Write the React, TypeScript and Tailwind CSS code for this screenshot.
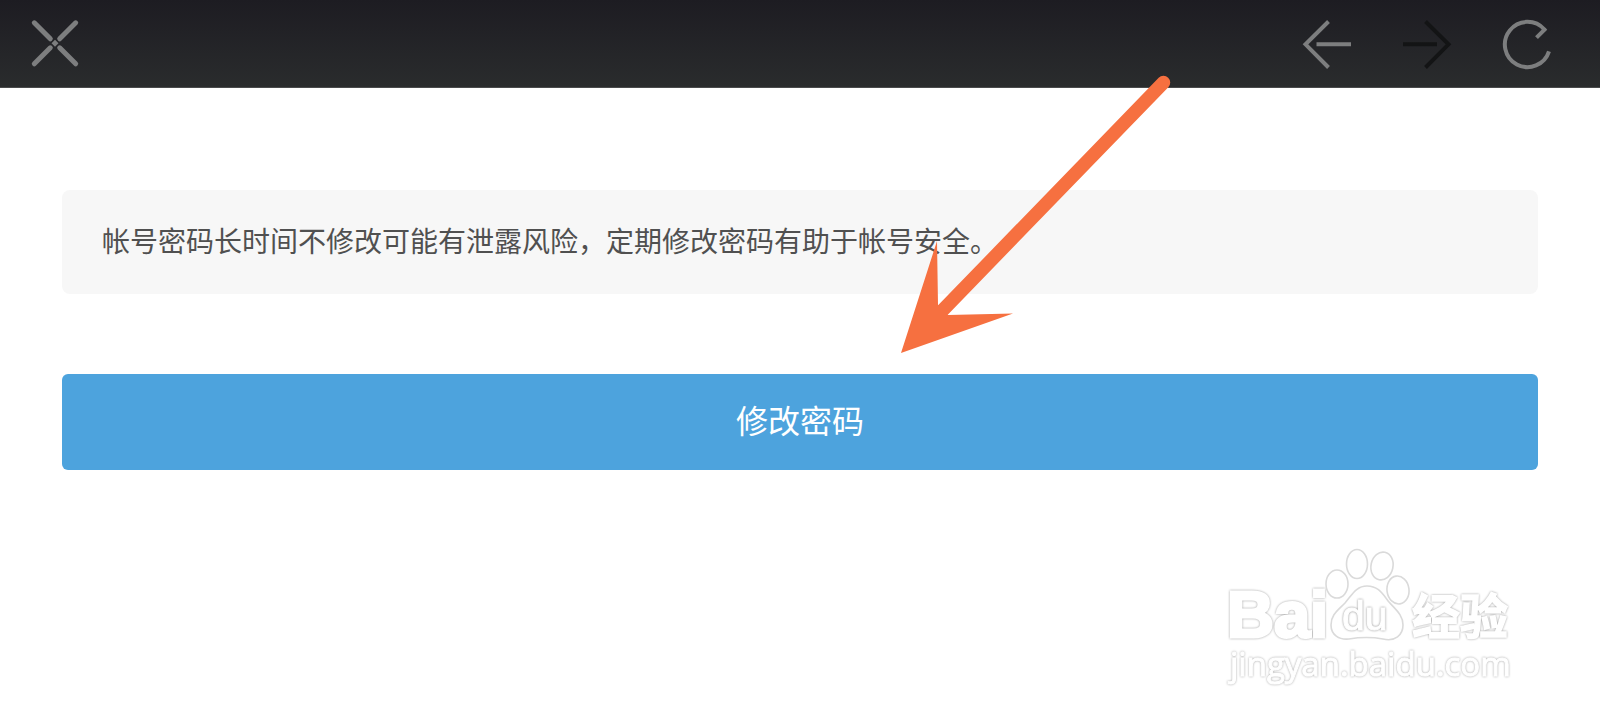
import type { ReactNode } from "react";

function BarButton({ label, disabled, children }: { label: string; disabled?: boolean; children: ReactNode }) {
  return (
    <button
      type="button"
      aria-label={label}
      disabled={disabled}
      className={disabled ? "size-12 text-[#131415]" : "size-12 text-[#7d7e7f]"}
    >
      <svg
        viewBox="0 0 48 48"
        className="size-12 overflow-visible"
        fill="none"
        stroke="currentColor"
        strokeWidth="4"
        aria-hidden="true"
      >
        {children}
      </svg>
    </button>
  );
}

function TopBar() {
  return (
    <header className="flex h-22 items-center justify-between border-b border-[#4a4b4c] bg-linear-to-b from-[#1d1c22] to-[#2a2c2d] pr-[49px] pl-[31px]">
      <BarButton label="关闭">
        <g strokeLinecap="round" strokeWidth="5">
          <path d="M3.3 2.8 19.3 18.8M44.7 2.8 28.7 18.8M3.3 43.8 19.3 27.8M44.7 43.8 28.7 27.8" />
          <path d="M24 19.8 27.5 23.3 24 26.8 20.5 23.3Z" fill="currentColor" stroke="none" />
        </g>
      </BarButton>
      <nav className="flex gap-13">
        <BarButton label="后退">
          <path d="M25.5 1.5 2.5 24.3 25.5 47.5M13.5 24.3H48" />
        </BarButton>
        <BarButton label="前进" disabled>
          <path d="M22.5 1.5 45.5 24.3 22.5 47.5M0 24.3H34" />
        </BarButton>
        <BarButton label="刷新">
          <path d="M46 31.3A22.6 22.6 0 1 1 41.5 9.6L33.5 17.6" />
        </BarButton>
      </nav>
    </header>
  );
}

function Pointer() {
  return (
    <svg
      viewBox="0 0 280 290"
      className="pointer-events-none absolute top-[70px] left-[900px] h-[290px] w-[280px]"
      aria-hidden="true"
    >
      <path d="M263.5 12.5 40 243" stroke="#f67040" strokeWidth="13.5" strokeLinecap="round" />
      <path d="M1 283 37 171 38 235 48 245 113 243.5Z" fill="#f67040" />
    </svg>
  );
}

function Watermark() {
  return (
    <svg
      viewBox="0 0 300 150"
      className="pointer-events-none absolute right-20 bottom-5 h-[150px] w-[300px] overflow-visible"
      fill="#ffffff"
      stroke="#dadada"
      strokeWidth="1.6"
      role="img"
      aria-label="Baidu 经验"
    >
      <text
        x="7"
        y="87"
        fontSize="65"
        stroke="#ffffff"
        strokeWidth="3"
        className="font-['Liberation_Sans',sans-serif] font-bold drop-shadow-[0_0_1px_#a0a0a0]"
      >
        Bai
      </text>
      <ellipse cx="117" cy="34" rx="11" ry="14" />
      <ellipse cx="137" cy="14" rx="10.5" ry="14.5" />
      <ellipse cx="162" cy="16" rx="11" ry="14" transform="rotate(12 162 16)" />
      <ellipse cx="178" cy="40" rx="11" ry="14" transform="rotate(-8 178 40)" />
      <path d="M147 36C136 36 132 45 125 53C117 61 111 65 111 75C111 85 119 90 129 89C141 87 152 87 163 89C175 92 183 85 183 75C183 65 176 60 169 52C162 43 158 36 147 36Z" />
      <text
        x="122"
        y="80"
        fontSize="41"
        stroke="#ffffff"
        strokeWidth="1"
        className="font-['Liberation_Sans',sans-serif] drop-shadow-[0_0_1px_#909090]"
      >
        du
      </text>
      <text
        x="192"
        y="84"
        fontSize="48"
        stroke="#ffffff"
        strokeWidth="1.5"
        className="font-['Noto_Sans_CJK_SC',sans-serif] font-bold drop-shadow-[0_0_1px_#a0a0a0]"
      >
        经验
      </text>
      <text
        x="10"
        y="126"
        fontSize="33"
        stroke="#ffffff"
        strokeWidth="1"
        className="font-['Open_Sans',sans-serif] drop-shadow-[0_0_1px_#a8a8a8]"
      >
        jingyan.baidu.com
      </text>
    </svg>
  );
}

export default function App() {
  return (
    <div className="relative min-h-screen bg-white font-['Noto_Sans_CJK_SC',sans-serif]">
      <TopBar />
      <main className="flex flex-col gap-20 px-[62px] pt-[102px]">
        <p className="rounded-lg bg-[#f7f7f7] px-10 pt-[30px] pb-[34px] text-[28px] leading-10 text-[#505050]">
          帐号密码长时间不修改可能有泄露风险，定期修改密码有助于帐号安全。
        </p>
        <button type="button" className="h-24 rounded-md bg-[#4da3dd] pb-1.5 text-[32px] leading-10 text-white">
          修改密码
        </button>
      </main>
      <Pointer />
      <Watermark />
    </div>
  );
}
